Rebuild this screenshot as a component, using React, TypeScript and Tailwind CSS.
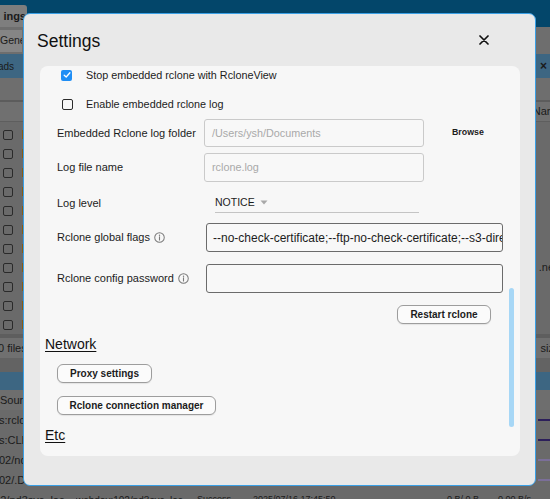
import React from "react";

const font = "font-['Liberation_Sans',Arial,sans-serif]";

function Info() {
  return (
    <svg width="11" height="11" viewBox="0 0 12 12" className="ml-[4px] shrink-0">
      <circle cx="6" cy="6" r="5.2" fill="none" stroke="#7a7a7a" strokeWidth="1.1" />
      <circle cx="6" cy="3.6" r="0.75" fill="#7a7a7a" />
      <path d="M6 5.2 V8.8" stroke="#7a7a7a" strokeWidth="1.2" strokeLinecap="round" />
    </svg>
  );
}

function BgCheckRow({ right }: { right?: string }) {
  return (
    <div className="flex h-[19px] items-center">
      <div className="ml-[3px] h-[10px] w-[10px] rounded-[2px] border border-[#2a2a2a]" />
      <div className="ml-[9px] h-[9px] w-[2px] bg-[#8a5a12]" />
      <div className="flex-1" />
      {right ? <span className="mr-[-4px] text-[11px] text-[#1a1a1a]">{right}</span> : null}
    </div>
  );
}

function Background() {
  return (
    <div className={`flex h-full w-full flex-col overflow-hidden bg-[#6a6a6a] ${font}`}>
      <div className="flex h-[27px] shrink-0 items-end bg-[#03466a]">
        <div className="flex h-[22px] w-[27px] items-center justify-end rounded-tr-[3px] bg-[#7e7e7e] pr-[1px] text-[11px] font-bold text-[#1a1a1a]">
          ings
        </div>
      </div>
      <div className="flex h-[27px] shrink-0 items-center bg-[#6e6e6e]">
        <div className="flex h-[22px] w-[22px] items-center overflow-hidden bg-[#858585] text-[10.5px] text-[#1a1a1a]">
          Gener
        </div>
      </div>
      <div className="flex h-[24px] shrink-0 items-center justify-between bg-[#3d6682] text-[10px] text-[#1a1a1a]">
        <span className="ml-[-2px]">ads</span>
        <span className="mr-[3px] text-[12px] font-bold">×</span>
      </div>
      <div className="h-[22px] shrink-0 bg-[#6e6e6e]" />
      <div className="h-[2px] shrink-0 bg-[#5c5c5c]" />
      <div className="flex h-[20px] shrink-0 items-center justify-end border-b border-[#5e5e5e] bg-[#707070] text-[11px] text-[#1a1a1a]">
        <span className="mr-[-6px]">Nam</span>
      </div>
      <div className="flex shrink-0 flex-col pt-[3px]">
        <BgCheckRow />
        <BgCheckRow />
        <BgCheckRow />
        <BgCheckRow />
        <BgCheckRow />
        <BgCheckRow />
        <BgCheckRow />
        <BgCheckRow right=".ne" />
        <BgCheckRow />
        <BgCheckRow />
        <BgCheckRow />
      </div>
      <div className="h-[4px] shrink-0 bg-[#5e5e5e]" />
      <div className="flex h-[20px] shrink-0 items-center justify-between bg-[#707070] text-[11px] text-[#1a1a1a]">
        <span className="ml-[-2px]">0 files</span>
        <span className="mr-[-4px]">siz</span>
      </div>
      <div className="h-[14px] shrink-0 bg-[#636363]" />
      <div className="h-[18px] shrink-0 bg-[#3d6682]" />
      <div className="flex h-[20px] shrink-0 items-center bg-[#6e6e6e] text-[11px] text-[#1a1a1a]">
        <span>Source</span>
      </div>
      {["s:rclone", "s:CLD", "02/nd3svc", "02/.DS"].map((t, i) => (
        <div key={t} className="flex h-[20px] shrink-0 items-center justify-between text-[11px] text-[#1a1a1a]">
          <span className="ml-[-1px]">{t}</span>
          <div className={`h-[2px] w-[12px] ${i < 2 ? "bg-[#2c1f5a]" : "bg-[#7b6f99]"}`} />
        </div>
      ))}
      <div className="flex h-[20px] shrink-0 items-center whitespace-nowrap text-[9px] text-[#1a1a1a]">
        <span className="ml-[-12px] w-[88px] shrink-0 overflow-hidden text-[11px]">102/nd3svc_loc</span>
        <span className="w-[121px] shrink-0 overflow-hidden text-[10px]">webdav:102/nd3svc_loc</span>
        <span className="w-[56px] shrink-0">Success</span>
        <span className="w-[137px] shrink-0">2025/07/16 17:45:50</span>
        <span className="w-[57px] shrink-0">-</span>
        <span className="w-[51px] shrink-0">0 B/ 0 B</span>
        <span>0.00 B/s</span>
      </div>
    </div>
  );
}

function Btn({ children, className = "" }: { children: React.ReactNode; className?: string }) {
  return (
    <div
      className={`flex h-[19px] items-center justify-center whitespace-nowrap rounded-[6px] border border-[#9d9d9d] bg-[#fbfbfb] text-[10px] font-bold text-[#1c1c1c] shadow-[0_1px_1px_rgba(0,0,0,0.08)] ${className}`}
    >
      {children}
    </div>
  );
}

function Field({ label, info, children }: { label: string; info?: boolean; children: React.ReactNode }) {
  return (
    <div className="flex items-center">
      <div className="flex w-[147px] shrink-0 items-center text-[11px] text-[#1c1c1c]">
        <span>{label}</span>
        {info ? <Info /> : null}
      </div>
      {children}
    </div>
  );
}

export default function App() {
  return (
    <div className={`relative h-[499px] w-[550px] overflow-hidden ${font}`}>
      <Background />
      <div className="absolute left-[23px] top-[13px] flex h-[473px] w-[513px] flex-col rounded-[7px] border border-[#3aa0e6] bg-[#e9e9e9]">
        <div className="flex h-[52px] shrink-0 items-center justify-between pl-[13px] pr-[46px]">
          <span className="pt-[2px] text-[17.5px] text-[#111]">Settings</span>
          <svg width="10" height="10" viewBox="0 0 10 10">
            <path d="M1 1 L9 9 M9 1 L1 9" stroke="#111" strokeWidth="1.7" strokeLinecap="round" />
          </svg>
        </div>
        <div className="relative ml-[16px] mr-[15px] h-[390px] overflow-hidden rounded-[8px] bg-[#f7f7f7]">
          <div className="flex flex-col pl-[17px]">
            <div className="flex h-[18px] items-center">
              <div className="ml-[4px] flex h-[11px] w-[11px] items-center justify-center rounded-[2px] bg-[#1f8ef5]">
                <svg width="8" height="8" viewBox="0 0 8 8">
                  <path d="M1.2 4.2 L3.2 6 L6.9 1.8" fill="none" stroke="#fff" strokeWidth="1.3" strokeLinecap="round" strokeLinejoin="round" />
                </svg>
              </div>
              <span className="ml-[14px] text-[10.8px] text-[#1c1c1c]">Stop embedded rclone with RcloneView</span>
            </div>
            <div className="mt-[11px] flex h-[18px] items-center">
              <div className="ml-[5px] h-[11px] w-[11px] rounded-[2px] border-[1.5px] border-[#2b2b2b]" />
              <span className="ml-[13px] text-[10.8px] text-[#1c1c1c]">Enable embedded rclone log</span>
            </div>
            <div className="mt-[6px]">
              <Field label="Embedded Rclone log folder">
                <div className="flex h-[28px] w-[220px] items-center rounded-[3px] border-[1.5px] border-[#cacaca] bg-[#f8f8f8] pl-[7px] text-[10.8px] text-[#a9a9a9]">
                  /Users/ysh/Documents
                </div>
                <span className="ml-[28px] text-[8.8px] font-bold text-[#1c1c1c]">Browse</span>
              </Field>
            </div>
            <div className="mt-[6px]">
              <Field label="Log file name">
                <div className="flex h-[29px] w-[220px] items-center rounded-[3px] border-[1.5px] border-[#cacaca] bg-[#f8f8f8] pl-[7px] text-[10.8px] text-[#a9a9a9]">
                  rclone.log
                </div>
              </Field>
            </div>
            <div className="mt-[11px]">
              <Field label="Log level">
                <div className="ml-[11px] flex h-[20px] w-[204px] items-center border-b border-[#c4c4c4] text-[10.5px] text-[#1c1c1c]">
                  <span>NOTICE</span>
                  <svg width="8" height="5" viewBox="0 0 8 5" className="ml-[5px]">
                    <path d="M0.5 0.5 L7.5 0.5 L4 4.5 Z" fill="#a8a8a8" />
                  </svg>
                </div>
              </Field>
            </div>
            <div className="mt-[10px]">
              <Field label="Rclone global flags" info>
                <div className="ml-[2px] flex h-[29px] w-[297px] items-center overflow-hidden whitespace-nowrap rounded-[3px] border-[1.5px] border-[#6b6b6b] bg-[#f8f8f8] pl-[6px] text-[12px] text-[#1c1c1c]">
                  --no-check-certificate;--ftp-no-check-certificate;--s3-directory-markers
                </div>
              </Field>
            </div>
            <div className="mt-[12px]">
              <Field label="Rclone config password" info>
                <div className="ml-[2px] h-[29px] w-[297px] rounded-[3px] border-[1.5px] border-[#6b6b6b] bg-[#f8f8f8]" />
              </Field>
            </div>
            <div className="mt-[12px] flex justify-end pr-[29px]">
              <Btn className="w-[94px]">Restart rclone</Btn>
            </div>
            <div className="ml-[-12px] mt-[11px] flex h-[18px] items-center">
              <span className="text-[14px] text-[#111] underline decoration-1 underline-offset-[2px]">Network</span>
            </div>
            <div className="mt-[11px] flex">
              <Btn className="w-[95px]">Proxy settings</Btn>
            </div>
            <div className="mt-[13px] flex">
              <Btn className="w-[159px]">Rclone connection manager</Btn>
            </div>
            <div className="ml-[-12px] mt-[11px] flex h-[18px] items-center">
              <span className="text-[14px] text-[#111] underline decoration-1 underline-offset-[2px]">Etc</span>
            </div>
          </div>
          <div className="absolute left-[469px] top-[222px] h-[139px] w-[5px] rounded-full bg-[#a7d7f6]" />
        </div>
      </div>
    </div>
  );
}
